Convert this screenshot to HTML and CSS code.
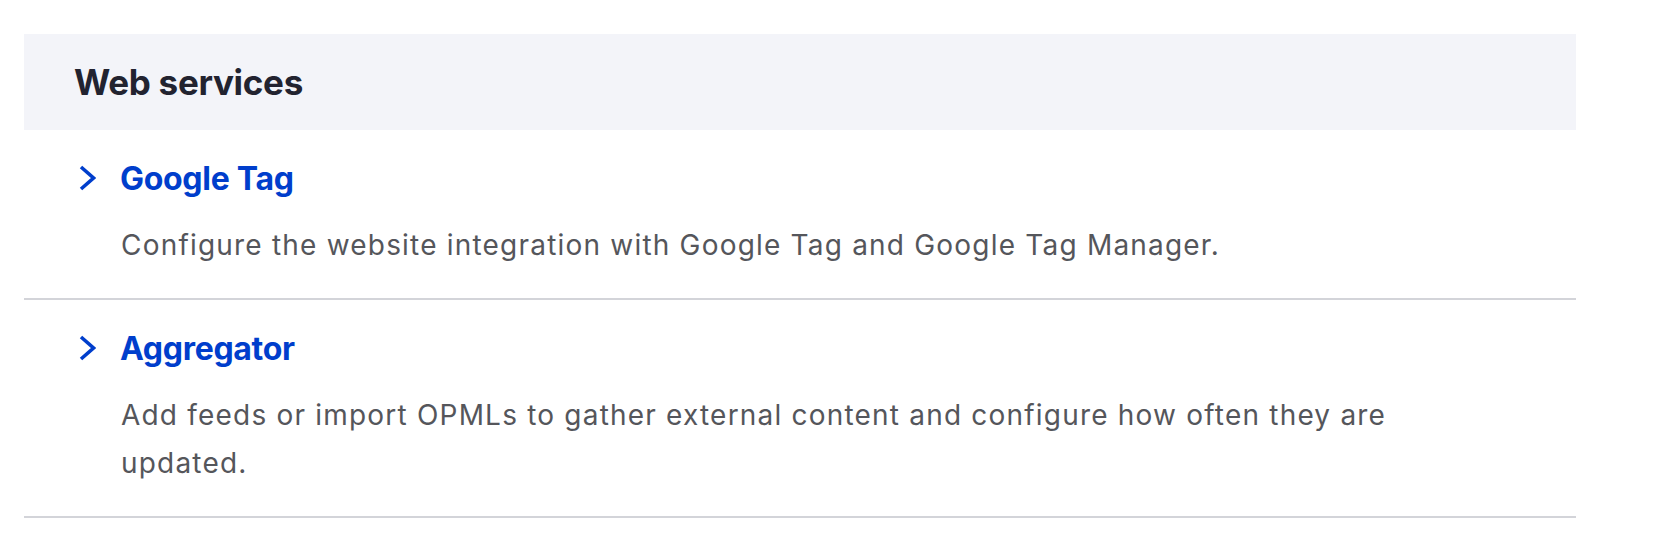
FILE: index.html
```html
<!DOCTYPE html>
<html lang="en">
<head>
    <meta charset="UTF-8">
    <meta name="viewport" content="width=device-width, initial-scale=1.0">
    <title>Web services</title>
    <link rel="stylesheet" href="styles.css">
</head>
<body>

<section class="panel">
    <h2 class="panel-title">Web services</h2>

    <ul class="admin-list">
        <li class="admin-item">
            <a class="admin-link" href="#">
                <svg class="chevron" width="17" height="26" viewBox="0 0 17 26"><polyline points="2,2 14.5,13 2,24" fill="none" stroke="currentColor" stroke-width="3.6"/></svg>
                Google Tag
            </a>
            <p class="admin-desc">Configure the website integration with Google Tag and Google Tag Manager.</p>
        </li>
        <li class="admin-item">
            <a class="admin-link" href="#">
                <svg class="chevron" width="17" height="26" viewBox="0 0 17 26"><polyline points="2,2 14.5,13 2,24" fill="none" stroke="currentColor" stroke-width="3.6"/></svg>
                Aggregator
            </a>
            <p class="admin-desc">Add feeds or import OPMLs to gather external content and configure how often they are updated.</p>
        </li>
    </ul>
</section>

</body>
</html>
```

FILE: styles.css
```css
body {
    margin: 0;
    background-color: #fff;
    font-family: Inter, "Noto Sans", sans-serif;
    color: #222330;
}
.panel {
    margin: 34px 78px 0 24px;
}
.panel-title {
    margin: 0;
    padding-left: 50px;
    height: 96px;
    line-height: 96px;
    font-size: 35px;
    font-weight: 700;
    letter-spacing: -0.3px;
    background-color: #f3f4f9;
    color: #222330;
}
.admin-list {
    list-style: none;
    margin: 0;
    padding: 0;
}
.admin-item {
    padding: 28px 0 29px 55px;
    border-bottom: 2px solid #d3d4d9;
}
.admin-link {
    display: flex;
    align-items: center;
    gap: 24px;
    height: 40px;
    font-size: 32px;
    font-weight: 700;
    letter-spacing: -0.3px;
    color: #003ecc;
    text-decoration: none;
}
.chevron {
    flex: none;
}
.admin-desc {
    margin: 23px 0 0 42px;
    max-width: 1300px;
    font-size: 28px;
    line-height: 48px;
    letter-spacing: 1.2px;
    color: #55565b;
}
```
